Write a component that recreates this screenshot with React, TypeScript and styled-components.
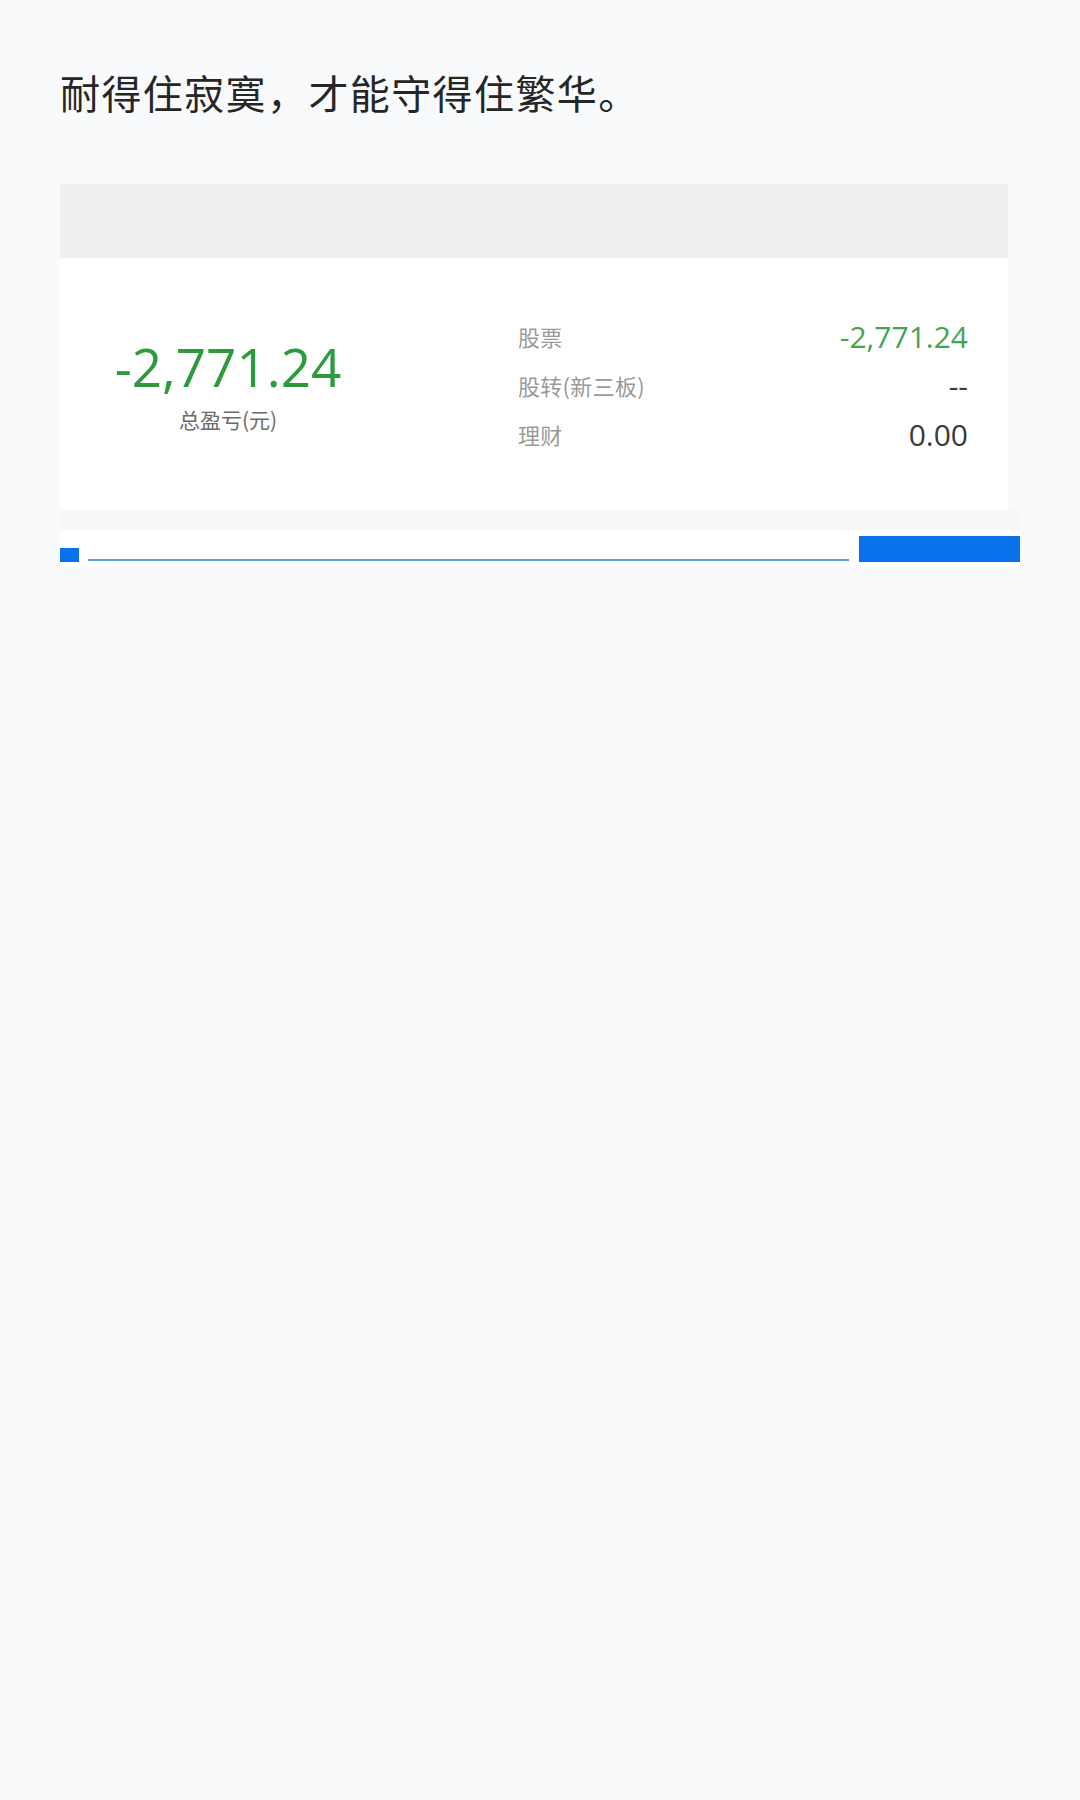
import React from "react";
import styled, { createGlobalStyle } from "styled-components";

const GlobalStyle = createGlobalStyle`
  html, body {
    margin: 0;
    padding: 0;
    background: #f9fafc;
  }
  body {
    font-family: "Noto Sans CJK SC", "Noto Sans", sans-serif;
  }
`;

const Page = styled.div`
  min-height: 1800px;
  padding: 64px 0 0 60px;
  box-sizing: border-box;
  background: #f9fafc;
`;

const Motto = styled.h1`
  margin: 0;
  font-family: "Noto Sans CJK SC", "Noto Sans", sans-serif;
  font-weight: 400;
  font-size: 40px;
  line-height: 56px;
  letter-spacing: 1.4px;
  color: #262626;
`;

const Panel = styled.section`
  margin-top: 64px;
  width: 960px;
  display: flex;
  flex-direction: column;
`;

const Card = styled.div`
  width: 948px;
  background: #ffffff;
`;

const CardHeader = styled.div`
  height: 74px;
  background: #efefef;
`;

const CardBody = styled.div`
  height: 252px;
  display: grid;
  grid-template-columns: 336px 450px;
  column-gap: 122px;
  align-items: center;
`;

const TotalBlock = styled.div`
  display: flex;
  flex-direction: column;
  align-items: center;
  margin-top: 2px;
`;

const TotalValue = styled.div`
  font-family: "Open Sans", "Noto Sans", sans-serif;
  font-size: 53px;
  line-height: 60px;
  color: #2b9b3c;
`;

const TotalLabel = styled.div`
  margin-top: 7px;
  font-family: "Noto Sans CJK SC", "Noto Sans", sans-serif;
  font-size: 21px;
  line-height: 30px;
  color: #6b6b6b;
`;

const Breakdown = styled.div`
  display: flex;
  flex-direction: column;
  margin-top: 2px;
`;

const Row = styled.div`
  height: 49px;
  display: flex;
  align-items: center;
  justify-content: space-between;
`;

const RowLabel = styled.span`
  font-family: "Noto Sans CJK SC", "Noto Sans", sans-serif;
  font-size: 22px;
  letter-spacing: 0.3px;
  color: #9a9a9a;
`;

const RowValue = styled.span<{ $tone: "green" | "dark" }>`
  font-family: "Open Sans", "Noto Sans", sans-serif;
  font-size: 30px;
  line-height: 49px;
  color: ${(p) => (p.$tone === "green" ? "#42a551" : "#3a3a3a")};
`;

const Strip = styled.div`
  height: 20px;
  background: #f7f7f7;
`;

const Footer = styled.div`
  height: 37px;
  background: #ffffff;
  display: flex;
  align-items: flex-end;
  padding-bottom: 5px;
  box-sizing: border-box;
`;

const Marker = styled.div`
  width: 19px;
  height: 14px;
  background: #0a73eb;
  flex: none;
`;

const Track = styled.div`
  flex: 1;
  height: 2px;
  margin: 0 10px 1px 9px;
  background: #5d9de8;
`;

const ActionBar = styled.div`
  width: 161px;
  height: 26px;
  background: #0a73eb;
  flex: none;
`;

const rows: { label: string; value: string; tone: "green" | "dark" }[] = [
  { label: "股票", value: "-2,771.24", tone: "green" },
  { label: "股转(新三板)", value: "--", tone: "dark" },
  { label: "理财", value: "0.00", tone: "dark" },
];

export default function App() {
  return (
    <>
      <GlobalStyle />
      <Page>
        <Motto>耐得住寂寞，才能守得住繁华。</Motto>
        <Panel>
          <Card>
            <CardHeader />
            <CardBody>
              <TotalBlock>
                <TotalValue>-2,771.24</TotalValue>
                <TotalLabel>总盈亏(元)</TotalLabel>
              </TotalBlock>
              <Breakdown>
                {rows.map((r) => (
                  <Row key={r.label}>
                    <RowLabel>{r.label}</RowLabel>
                    <RowValue $tone={r.tone}>{r.value}</RowValue>
                  </Row>
                ))}
              </Breakdown>
            </CardBody>
          </Card>
          <Strip />
          <Footer>
            <Marker />
            <Track />
            <ActionBar />
          </Footer>
        </Panel>
      </Page>
    </>
  );
}
